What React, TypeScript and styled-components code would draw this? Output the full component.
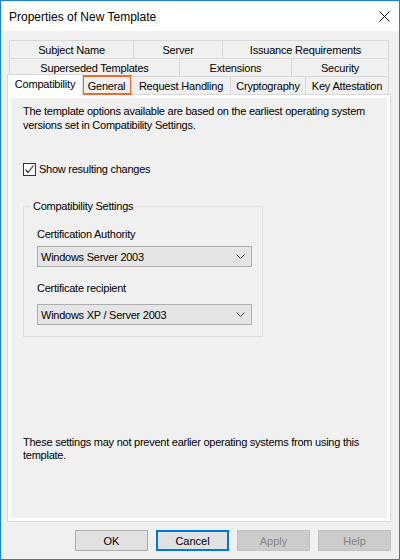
import { createGlobalStyle } from 'styled-components'
import styled from 'styled-components'

const GlobalStyle = createGlobalStyle`
	html, body {
		margin: 0;
		padding: 0;
		background: #f0f0f0;
	}
	* {
		box-sizing: border-box;
	}
`

type TabDef = { label: string; width: number; active?: boolean; marked?: boolean }

const tabRows: TabDef[][] = [
	[
		{ label: 'Subject Name', width: 124 },
		{ label: 'Server', width: 89 },
		{ label: 'Issuance Requirements', width: 166 },
	],
	[
		{ label: 'Superseded Templates', width: 170 },
		{ label: 'Extensions', width: 112 },
		{ label: 'Security', width: 97 },
	],
	[
		{ label: 'Compatibility', width: 72, active: true },
		{ label: 'General', width: 50, marked: true },
		{ label: 'Request Handling', width: 99 },
		{ label: 'Cryptography', width: 75 },
		{ label: 'Key Attestation', width: 83 },
	],
]

const CloseIcon = () => (
	<svg width="11" height="11" viewBox="0 0 11 11">
		<path d="M0.5 0.5 L10.5 10.5 M10.5 0.5 L0.5 10.5" stroke="#000" strokeWidth="1" fill="none" />
	</svg>
)

const Chevron = () => (
	<svg width="9" height="5" viewBox="0 0 9 5">
		<path d="M0.5 0.5 L4.5 4.5 L8.5 0.5" stroke="#444" strokeWidth="1" fill="none" />
	</svg>
)

const CheckMark = () => (
	<svg width="11" height="11" viewBox="0 0 11 11">
		<path d="M1.5 5.5 L4 8.5 L9.5 1.5" stroke="#333" strokeWidth="1.2" fill="none" />
	</svg>
)

export default function App() {
	return (
		<>
			<GlobalStyle />
			<Window>
				<TitleBar>
					<Title>Properties of New Template</Title>
					<CloseBox>
						<CloseIcon />
					</CloseBox>
				</TitleBar>
				<Body>
					<Tabs>
						{tabRows.map((row, i) => (
							<TabRow key={i}>
								{row.map(tab => (
									<Tab key={tab.label} $width={tab.width} $active={tab.active} $marked={tab.marked}>
										{tab.label}
									</Tab>
								))}
							</TabRow>
						))}
					</Tabs>
					<Panel>
						<Page>
							<Paragraph>
								The template options available are based on the earliest operating system
								<br />
								versions set in Compatibility Settings.
							</Paragraph>
							<CheckRow>
								<CheckBox>
									<CheckMark />
								</CheckBox>
								<span>Show resulting changes</span>
							</CheckRow>
							<Group>
								<Legend>Compatibility Settings</Legend>
								<FieldLabel $top={14} $bottom={5}>
									Certification Authority
								</FieldLabel>
								<Combo>
									<span>Windows Server 2003</span>
									<Chevron />
								</Combo>
								<FieldLabel $top={14} $bottom={9}>
									Certificate recipient
								</FieldLabel>
								<Combo>
									<span>Windows XP / Server 2003</span>
									<Chevron />
								</Combo>
							</Group>
							<FootNote>
								These settings may not prevent earlier operating systems from using this
								<br />
								template.
							</FootNote>
						</Page>
					</Panel>
					<ButtonBar>
						<Button>OK</Button>
						<Button $focused>Cancel</Button>
						<Button disabled>Apply</Button>
						<Button disabled>Help</Button>
					</ButtonBar>
				</Body>
			</Window>
		</>
	)
}

const Window = styled.div`
	width: 400px;
	height: 560px;
	border: 1px solid #1883d7;
	background: #f0f0f0;
	display: flex;
	flex-direction: column;
	font-family: 'Liberation Sans', Arial, sans-serif;
	font-size: 11px;
	letter-spacing: -0.15px;
	color: #000;
`

const TitleBar = styled.div`
	height: 30px;
	background: #fff;
	display: flex;
	align-items: center;
	justify-content: space-between;
	padding: 1px 9px 0 8px;
`

const Title = styled.div`
	font-size: 12px;
	letter-spacing: 0;
`

const CloseBox = styled.div`
	display: flex;
	align-items: center;
`

const Body = styled.div`
	flex: 1;
	display: flex;
	flex-direction: column;
	padding: 9px 8px 0 6px;
`

const Tabs = styled.div`
	display: flex;
	flex-direction: column;
	margin: 0 2px;
`

const TabRow = styled.div`
	display: flex;
	align-items: flex-start;
	height: 18px;
	border-right: 1px solid #d9d9d9;
`

const Tab = styled.div<{ $width: number; $active?: boolean; $marked?: boolean }>`
	position: relative;
	width: ${p => (p.$active ? p.$width + 4 : p.$width)}px;
	height: ${p => (p.$active ? 21 : 18)}px;
	margin: ${p => (p.$active ? '-2px -2px 0 -2px' : '0')};
	z-index: ${p => (p.$active ? 2 : 0)};
	border-top: 1px solid #d9d9d9;
	border-left: 1px solid #d9d9d9;
	border-right: ${p => (p.$active ? '1px solid #d9d9d9' : 'none')};
	background: ${p => (p.$active ? '#fff' : '#f0f0f0')};
	display: flex;
	align-items: ${p => (p.$active ? 'flex-start' : 'center')};
	padding-top: ${p => (p.$active ? '2px' : '0')};
	justify-content: center;
	white-space: nowrap;
	line-height: 14px;
	letter-spacing: -0.2px;

	${p =>
		p.$marked &&
		`
		&::after {
			content: '';
			position: absolute;
			left: 0;
			top: -2px;
			right: -1px;
			bottom: -1px;
			border: 2px solid #ee6a2c;
		}
	`}
`

const Panel = styled.div`
	flex: 1;
	display: flex;
	border: 1px solid #d9d9d9;
	background: #fff;
	padding: 3px;
`

const Page = styled.div`
	flex: 1;
	display: flex;
	flex-direction: column;
	align-items: flex-start;
	background: #f0f0f0;
	padding: 6px 12px 56px 12px;
	white-space: nowrap;
	letter-spacing: -0.25px;
`

const Paragraph = styled.div`
	line-height: 14px;
`

const CheckRow = styled.div`
	display: flex;
	align-items: center;
	gap: 3px;
	margin-top: 30px;
	line-height: 14px;
`

const CheckBox = styled.div`
	width: 13px;
	height: 13px;
	border: 1px solid #333;
	background: #fff;
	display: flex;
	align-items: center;
	justify-content: center;
`

const Group = styled.fieldset`
	width: 240px;
	margin: 23px 0 0 0;
	padding: 0 10px 11px 13px;
	border: 1px solid #dcdcdc;
	display: flex;
	flex-direction: column;
`

const Legend = styled.legend`
	margin-left: -6px;
	padding: 0 2px;
	line-height: 14px;
	font-size: 11px;
`

const FieldLabel = styled.div<{ $top: number; $bottom: number }>`
	line-height: 14px;
	margin-top: ${p => p.$top}px;
	margin-bottom: ${p => p.$bottom}px;
`

const Combo = styled.div`
	width: 215px;
	height: 21px;
	background: #e5e5e5;
	border: 1px solid #adadad;
	display: flex;
	align-items: center;
	justify-content: space-between;
	padding: 0 6px 0 3px;
	line-height: 14px;
`

const FootNote = styled.div`
	margin-top: auto;
	line-height: 13px;
`

const ButtonBar = styled.div`
	display: flex;
	justify-content: flex-end;
	gap: 8px;
	margin-top: 8px;
	padding: 0 0 8px 0;
`

const Button = styled.button<{ $focused?: boolean }>`
	width: 73px;
	height: 21px;
	margin: 0;
	font-family: 'Liberation Sans', Arial, sans-serif;
	font-size: 11px;
	color: #000;
	background: #e1e1e1;
	border: ${p => (p.$focused ? '2px solid #0078d7' : '1px solid #adadad')};
	padding: 0;

	&:disabled {
		background: #cccccc;
		border-color: #bfbfbf;
		color: #838383;
	}
`
